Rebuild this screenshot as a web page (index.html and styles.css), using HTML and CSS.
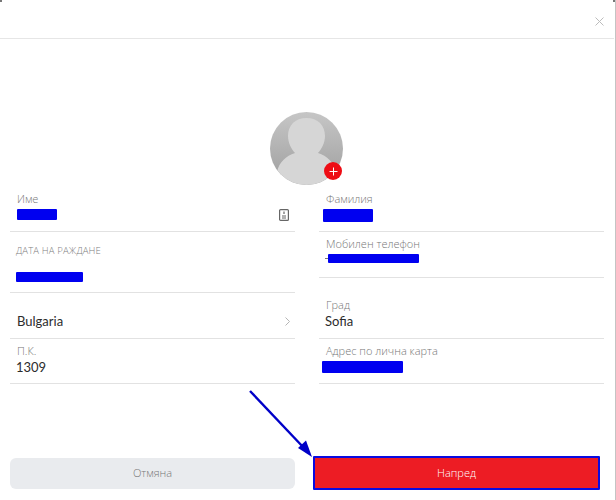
FILE: index.html
```html
<!DOCTYPE html>
<html lang="bg">
<head>
<meta charset="utf-8">
<title>Профил</title>
<link rel="stylesheet" href="styles.css">
</head>
<body>
<div class="modal">
  <header class="head">
    <svg class="close" viewBox="0 0 9 9" width="9" height="9"><path d="M.5.5l8 8M8.500.5l-8 8"/></svg>
  </header>
  <div class="avatar-row">
    <div class="avatar">
      <svg viewBox="0 0 73 73" width="73" height="73">
        <defs>
          <linearGradient id="bg" x1="0" y1="0" x2="0" y2="1">
            <stop offset="0" stop-color="#c6c6c6"/>
            <stop offset="1" stop-color="#9e9e9e"/>
          </linearGradient>
          <clipPath id="c"><circle cx="36.5" cy="36.5" r="36.5"/></clipPath>
        </defs>
        <g clip-path="url(#c)">
          <rect width="73" height="73" fill="url(#bg)"/>
          <path fill="#d6d6d6" d="M36.500 6C25 6 18 13.500 18 24c0 7 3.500 13 7 17C16 44 9 50 7 60v13h59V60c-2-10-9-16-18-19 3.500-4 7-10 7-17C55 13.500 48 6 36.500 6z"/>
        </g>
      </svg>
      <span class="badge">
        <svg viewBox="0 0 9 9" width="9" height="9"><path d="M4.500.5v8M.5 4.500h8"/></svg>
      </span>
    </div>
  </div>
  <div class="form">
    <div class="col">
      <div class="field f-name">
        <div class="label">Име</div>
        <div class="mask m-name"></div>
        <svg class="card" viewBox="0 0 10 12" width="10" height="12"><rect x=".6" y=".6" width="8.800" height="10.800" rx="1"/><path d="M5 2.500v2.500M3 7h4M3 9h4"/></svg>
      </div>
      <div class="field f-date">
        <div class="label caps">ДАТА НА РАЖДАНЕ</div>
        <div class="mask m-date"></div>
      </div>
      <div class="field f-country">
        <span class="value">Bulgaria</span>
        <svg class="chev" viewBox="0 0 5 9" width="5" height="9"><path d="M.5.5l4 4-4 4"/></svg>
      </div>
      <div class="field f-zip">
        <div class="label">П.К.</div>
        <div class="value">1309</div>
      </div>
    </div>
    <div class="col">
      <div class="field f-name">
        <div class="label">Фамилия</div>
        <div class="mask m-last"></div>
      </div>
      <div class="field f-phone">
        <div class="label">Мобилен телефон</div>
        <div class="phone-line"><span class="dash"></span><div class="mask m-phone"></div></div>
      </div>
      <div class="field f-city">
        <div class="label">Град</div>
        <div class="value">Sofia</div>
      </div>
      <div class="field f-zip">
        <div class="label">Адрес по лична карта</div>
        <div class="mask m-addr"></div>
      </div>
    </div>
  </div>
  <div class="actions">
    <button class="btn cancel" type="button">Отмяна</button>
    <button class="btn next" type="button">Напред</button>
  </div>
  <svg class="arrow" viewBox="0 0 70 72" width="70" height="72">
    <path class="shaft" d="M1 1L55 58"/>
    <path class="tip" d="M63 67L49 58l8-7.500z"/>
  </svg>
  <span class="corner corner-l"></span>
  <span class="corner corner-r"></span>
</div>
</body>
</html>
```
FILE: styles.css
```css
html, body { margin: 0; padding: 0; background: #fff; }
body { width: 616px; height: 500px; overflow: hidden; font-family: "Open Sans", "Noto Sans", sans-serif; }
.modal { position: relative; box-sizing: border-box; width: 616px; height: 500px; border-right: 1px solid #c4c4c4; padding-right: 1px; }
.head { box-sizing: border-box; height: 39px; border-bottom: 1px solid #e6e6e6; display: flex; justify-content: flex-end; padding: 17px 10px 0 0; }
.close path { fill: none; stroke: #bcbcbc; stroke-width: 1; }
.avatar-row { display: flex; justify-content: center; padding-top: 73px; margin-right: 1px; }
.avatar { position: relative; width: 73px; height: 73px; }
.avatar svg { display: block; }
.badge { position: absolute; left: 54px; top: 50px; width: 18px; height: 18px; border-radius: 50%; background: #ee0c14; display: flex; align-items: center; justify-content: center; }
.badge path { fill: none; stroke: #fff; stroke-width: 1; }
.form { display: grid; grid-template-columns: 285px 285px; column-gap: 24px; padding: 0 0 0 10px; }
.field { position: relative; box-sizing: border-box; border-bottom: 1px solid #e2e2e2; padding-left: 7px; }
.f-name { height: 47px; padding-top: 7px; }
.f-date { height: 61px; padding-top: 12px; padding-left: 6px; }
.f-phone { height: 46px; padding-top: 5px; }
.f-country { height: 46px; padding-top: 20px; display: flex; justify-content: space-between; padding-right: 5px; }
.f-city { height: 61px; padding-top: 20px; }
.f-zip { height: 45px; padding-top: 5px; }
.label { font-size: 11px; line-height: 14px; font-weight: 300; color: #777; }
.caps { font-size: 9.500px; letter-spacing: .15px; color: #808080; }
.value { font-family: "Lato", "Open Sans", sans-serif; font-size: 13px; line-height: 17px; color: #2c2c2c; }
.f-zip .value, .f-city .value { margin-left: -1px; margin-top: 1px; }
.mask { background: #0000f0; border-radius: 1px; }
.m-name { width: 40px; height: 11px; margin-top: 3px; }
.m-date { width: 67px; height: 10px; margin-top: 14px; }
.m-last { width: 50px; height: 13px; margin: 3px 0 0 -3px; }
.phone-line { display: flex; align-items: center; margin: 3px 0 0 -1px; }
.dash { width: 3px; height: 1px; background: #777; }
.m-phone { width: 91px; height: 9px; }
.m-addr { width: 81px; height: 12px; margin: 3px 0 0 -4px; }
.card { position: absolute; right: 6px; top: 24px; }
.card rect, .card path { fill: none; stroke: #666; stroke-width: 1.200; }
.chev { margin-top: 4px; }
.chev path { fill: none; stroke: #b5b5b5; stroke-width: 1; }
.actions { display: flex; align-items: center; padding: 72px 0 0 10px; gap: 18px; }
.btn { font-family: "Open Sans", "Noto Sans", sans-serif; font-size: 11px; line-height: 13px; font-weight: 300; padding: 0 0 2px; border-radius: 6px; cursor: pointer; }
.cancel { width: 285px; height: 31px; border: 0; background: #e9ebee; color: #777; }
.next { box-sizing: border-box; width: 287px; height: 34px; border: 2px solid #0a0ae0; border-radius: 1px; background: #ed1c24; color: #fff; }
.arrow { position: absolute; left: 249px; top: 390px; }
.shaft { fill: none; stroke: #0000c8; stroke-width: 2.400; }
.tip { fill: #0000c8; }
.corner { position: absolute; width: 2px; height: 2px; background: #777; top: 0; }
.corner-l { left: 0; }
.corner-r { right: 0; }
```
